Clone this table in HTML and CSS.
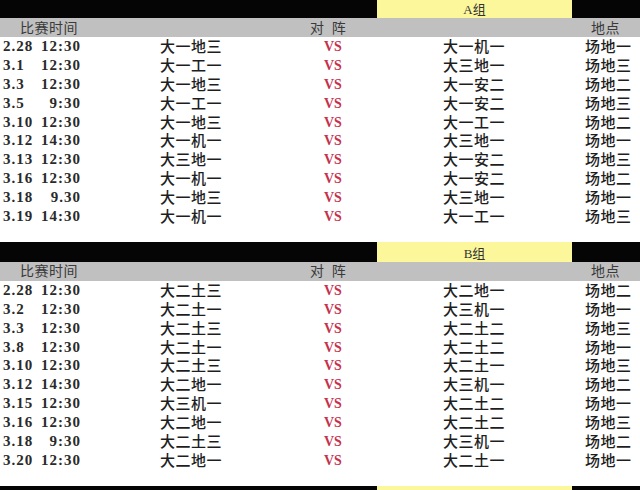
FILE: index.html
```html
<!DOCTYPE html>
<html lang="zh">
<head>
<meta charset="utf-8">
<link rel="stylesheet" href="styles.css">
</head>
<body>
<div class="page">
  <section class="group">
    <div class="bar bar-first"><span></span><span class="label">A组</span><span></span></div>
    <div class="head"><span class="h-time">比赛时间</span><span class="h-vs">对&nbsp;&nbsp;阵</span><span class="h-place">地点</span></div>
    <div class="row"><span class="dt"><span>2.28</span><span>12:30</span></span><span class="tm">大一地三</span><span class="vs">VS</span><span class="tm">大一机一</span><span class="pl">场地一</span></div>
    <div class="row"><span class="dt"><span>3.1</span><span>12:30</span></span><span class="tm">大一工一</span><span class="vs">VS</span><span class="tm">大三地一</span><span class="pl">场地三</span></div>
    <div class="row"><span class="dt"><span>3.3</span><span>12:30</span></span><span class="tm">大一地三</span><span class="vs">VS</span><span class="tm">大一安二</span><span class="pl">场地二</span></div>
    <div class="row"><span class="dt"><span>3.5</span><span>9:30</span></span><span class="tm">大一工一</span><span class="vs">VS</span><span class="tm">大一安二</span><span class="pl">场地三</span></div>
    <div class="row"><span class="dt"><span>3.10</span><span>12:30</span></span><span class="tm">大一地三</span><span class="vs">VS</span><span class="tm">大一工一</span><span class="pl">场地二</span></div>
    <div class="row"><span class="dt"><span>3.12</span><span>14:30</span></span><span class="tm">大一机一</span><span class="vs">VS</span><span class="tm">大三地一</span><span class="pl">场地一</span></div>
    <div class="row"><span class="dt"><span>3.13</span><span>12:30</span></span><span class="tm">大三地一</span><span class="vs">VS</span><span class="tm">大一安二</span><span class="pl">场地三</span></div>
    <div class="row"><span class="dt"><span>3.16</span><span>12:30</span></span><span class="tm">大一机一</span><span class="vs">VS</span><span class="tm">大一安二</span><span class="pl">场地二</span></div>
    <div class="row"><span class="dt"><span>3.18</span><span>9.30</span></span><span class="tm">大一地三</span><span class="vs">VS</span><span class="tm">大三地一</span><span class="pl">场地一</span></div>
    <div class="row"><span class="dt"><span>3.19</span><span>14:30</span></span><span class="tm">大一机一</span><span class="vs">VS</span><span class="tm">大一工一</span><span class="pl">场地三</span></div>
  </section>
  <section class="group">
    <div class="bar"><span></span><span class="label">B组</span><span></span></div>
    <div class="head"><span class="h-time">比赛时间</span><span class="h-vs">对&nbsp;&nbsp;阵</span><span class="h-place">地点</span></div>
    <div class="row"><span class="dt"><span>2.28</span><span>12:30</span></span><span class="tm">大二土三</span><span class="vs">VS</span><span class="tm">大二地一</span><span class="pl">场地二</span></div>
    <div class="row"><span class="dt"><span>3.2</span><span>12:30</span></span><span class="tm">大二土一</span><span class="vs">VS</span><span class="tm">大三机一</span><span class="pl">场地一</span></div>
    <div class="row"><span class="dt"><span>3.3</span><span>12:30</span></span><span class="tm">大二土三</span><span class="vs">VS</span><span class="tm">大二土二</span><span class="pl">场地三</span></div>
    <div class="row"><span class="dt"><span>3.8</span><span>12:30</span></span><span class="tm">大二土一</span><span class="vs">VS</span><span class="tm">大二土二</span><span class="pl">场地一</span></div>
    <div class="row"><span class="dt"><span>3.10</span><span>12:30</span></span><span class="tm">大二土三</span><span class="vs">VS</span><span class="tm">大二土一</span><span class="pl">场地三</span></div>
    <div class="row"><span class="dt"><span>3.12</span><span>14:30</span></span><span class="tm">大二地一</span><span class="vs">VS</span><span class="tm">大三机一</span><span class="pl">场地二</span></div>
    <div class="row"><span class="dt"><span>3.15</span><span>12:30</span></span><span class="tm">大三机一</span><span class="vs">VS</span><span class="tm">大二土二</span><span class="pl">场地一</span></div>
    <div class="row"><span class="dt"><span>3.16</span><span>12:30</span></span><span class="tm">大二地一</span><span class="vs">VS</span><span class="tm">大二土二</span><span class="pl">场地三</span></div>
    <div class="row"><span class="dt"><span>3.18</span><span>9:30</span></span><span class="tm">大二土三</span><span class="vs">VS</span><span class="tm">大三机一</span><span class="pl">场地二</span></div>
    <div class="row"><span class="dt"><span>3.20</span><span>12:30</span></span><span class="tm">大二地一</span><span class="vs">VS</span><span class="tm">大二土一</span><span class="pl">场地一</span></div>
  </section>
  <section class="group">
    <div class="bar"><span></span><span class="label"></span><span></span></div>
  </section>
</div>
</body>
</html>
```
FILE: styles.css
```css
html, body {
  margin: 0;
  padding: 0;
  background: #fff;
}
body {
  width: 640px;
  height: 490px;
  overflow: hidden;
  font-family: "Liberation Serif", "Noto Sans CJK SC", serif;
  color: #1e1e1e;
}
.page {
  display: flex;
  flex-direction: column;
  gap: 16px;
}
.bar {
  display: grid;
  grid-template-columns: 377px 195px 1fr;
  height: 20px;
  background: #050505;
}
.bar-first {
  height: 18px;
}
.label {
  background: #fbf79a;
  display: flex;
  align-items: flex-end;
  justify-content: center;
  font-size: 13px;
  line-height: 16px;
  color: #333;
  font-family: "Liberation Serif", "Noto Sans CJK SC", serif;
}
.head {
  height: 19px;
  background: #c0c0c0;
  display: grid;
  grid-template-columns: 310px 1fr auto;
  align-items: center;
  font-family: "Liberation Sans", "Noto Sans CJK SC", sans-serif;
  font-size: 14px;
  line-height: 16px;
  color: #3a3a3a;
}
.h-time {
  padding-left: 20px;
  letter-spacing: 0.5px;
}
.h-place {
  padding-right: 20px;
  letter-spacing: 0.5px;
}
.row {
  display: grid;
  grid-template-columns: 160px 163px 120px 142px 1fr;
  height: 18.9px;
  align-items: center;
  font-size: 15px;
  line-height: 17px;
  font-weight: 700;
  font-family: "Liberation Serif", serif;
}
.row > span {
  white-space: nowrap;
}
.tm,
.pl {
  font-family: "Liberation Sans", "Noto Sans CJK SC", sans-serif;
  font-weight: 500;
  font-size: 15px;
  letter-spacing: 0.5px;
}
.dt {
  display: flex;
  justify-content: space-between;
  width: 78px;
  padding-left: 3px;
  letter-spacing: 1px;
  color: #2a2a2a;
}
.vs {
  color: #c8304c;
  font-family: "Liberation Serif", serif;
  font-weight: 700;
  font-size: 14px;
  padding-left: 1px;
}
```
